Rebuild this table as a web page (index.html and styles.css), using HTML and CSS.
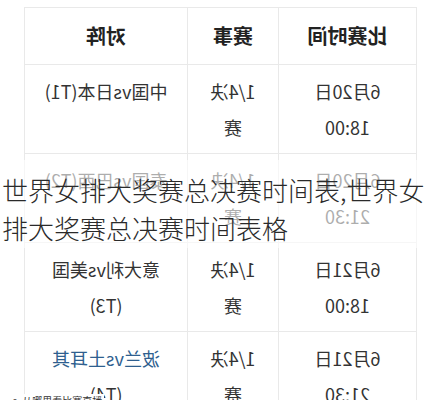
FILE: index.html
```html
<!DOCTYPE html>
<html lang="zh-CN">
<head>
<meta charset="utf-8">
<title>世界女排大奖赛总决赛时间表</title>
<link rel="stylesheet" href="styles.css">
</head>
<body>
<div class="stage">
  <div class="mirror">
    <table class="schedule">
      <colgroup>
        <col class="c-time">
        <col class="c-round">
        <col class="c-match">
      </colgroup>
      <thead>
        <tr><th>比赛时间</th><th>赛事</th><th>对阵</th></tr>
      </thead>
      <tbody>
        <tr><td>6月20日 18:00</td><td>1/4决赛</td><td>中国vs日本(T1)</td></tr>
        <tr><td>6月20日 21:30</td><td>1/4决赛</td><td>泰国vs巴西(T2)</td></tr>
        <tr><td>6月21日 18:00</td><td>1/4决赛</td><td>意大利vs美国(T3)</td></tr>
        <tr><td>6月21日 21:30</td><td>1/4决赛</td><td><span class="link">波兰vs土耳其</span>(T4)</td></tr>
      </tbody>
    </table>
  </div>
  <div class="caption">世界女排大奖赛总决赛时间表,世界女排大奖赛总决赛时间表格</div>
  <div class="footnote">▪ 从哪里看比赛直播</div>
</div>
</body>
</html>
```

FILE: styles.css
```css
html, body {
  margin: 0;
  padding: 0;
  background: #ffffff;
}

.stage {
  position: relative;
  width: 443px;
  height: 400px;
  overflow: hidden;
  background: #ffffff;
  font-family: "Noto Sans CJK SC", "Noto Sans", sans-serif;
}

.mirror {
  width: 443px;
  padding-top: 7px;
  transform: scaleX(-1);
  transform-origin: center;
}

.schedule {
  margin-left: 26px;
  width: 392px;
  border-collapse: collapse;
  table-layout: fixed;
  color: #333333;
  font-size: 18px;
  line-height: 36px;
}

.c-time { width: 138px; }
.c-round { width: 91px; }
.c-match { width: 163px; }

.schedule th,
.schedule td {
  border: 1px solid #e9e9e9;
  text-align: center;
  vertical-align: top;
  padding: 8px 16px;
}

.schedule th {
  font-size: 20px;
  font-weight: bold;
  color: #222222;
  padding: 10px 8px;
}

.schedule .link {
  color: #2f5f8f;
}

.caption {
  position: absolute;
  left: 0;
  top: 160px;
  width: 443px;
  padding: 11px 0 0 2px;
  box-sizing: border-box;
  height: 88px;
  background: rgba(255, 255, 255, 0.6);
  color: #2a2a2a;
  font-size: 26px;
  font-weight: 300;
  line-height: 38px;
}

.footnote {
  position: absolute;
  left: 8px;
  top: 394px;
  padding: 0 2px;
  background: #ffffff;
  color: #333333;
  font-size: 10px;
  line-height: 13px;
}
```
